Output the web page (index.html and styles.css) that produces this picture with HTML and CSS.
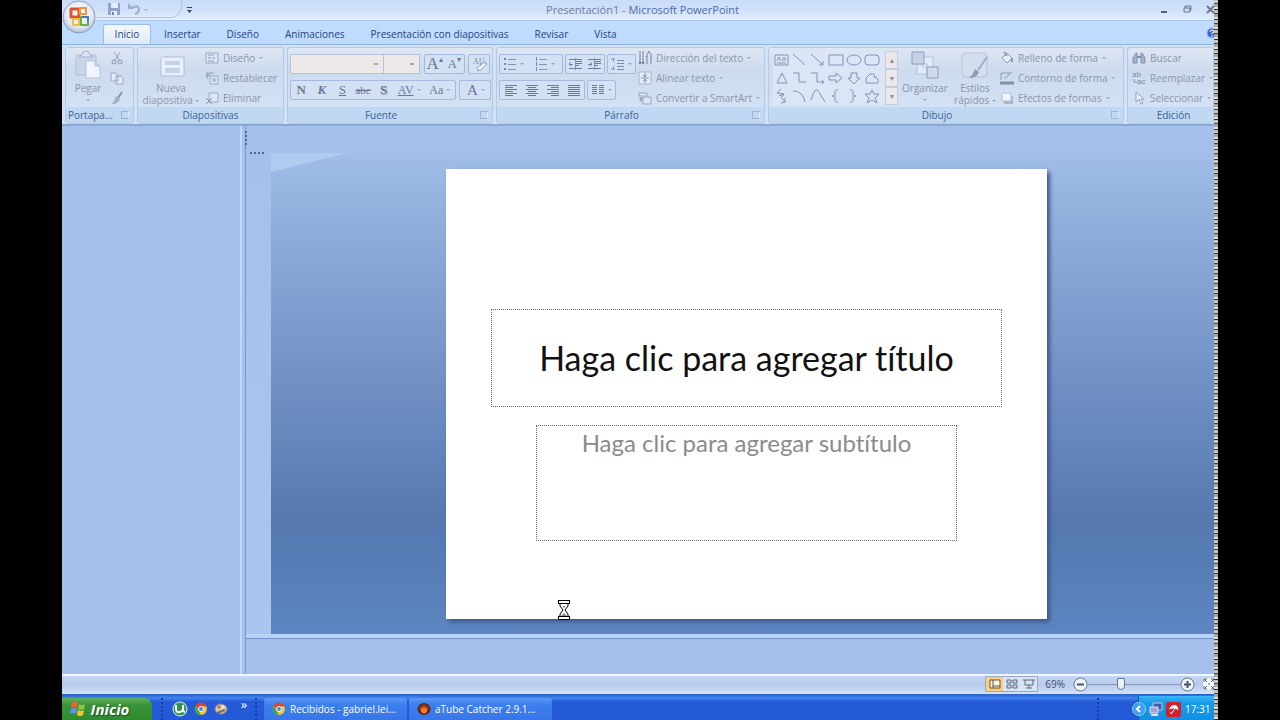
FILE: index.html
```html
<!DOCTYPE html>
<html lang="es">
<head>
<meta charset="utf-8">
<title>Presentación1 - Microsoft PowerPoint</title>
<link rel="stylesheet" href="styles.css">
</head>
<body>
<div class="screen">
<div class="desktop">

<header class="titlebar">
  <button class="orb" aria-label="Botón de Office">
    <svg width="34" height="34" viewBox="0 0 34 34"><defs><radialGradient id="orb" cx=".5" cy=".4" r=".6"><stop offset="0" stop-color="#fff"/><stop offset=".7" stop-color="#e3e9f3"/><stop offset="1" stop-color="#a9b8d2"/></radialGradient></defs><circle cx="17" cy="17" r="16" fill="url(#orb)" stroke="#8d9fc0"/><g fill="none" stroke-linejoin="round"><rect x="9" y="9" width="8" height="8" stroke="#e0562c" stroke-width="3"/><rect x="18" y="8" width="6" height="6" stroke="#f0933a" stroke-width="2"/><rect x="11" y="19" width="6" height="6" stroke="#f2bd30" stroke-width="2"/><rect x="19" y="17" width="7" height="8" stroke="#6fae45" stroke-width="2"/><path d="M20 17h6v5" stroke="#3f79c9" stroke-width="2"/></g></svg>
  </button>
  <div class="quick">
    <button aria-label="Guardar"><svg width="14" height="14" viewBox="0 0 14 14"><path d="M1 1h12v12H1z" fill="#8fa3cd"/><path d="M4 1h7v5H4zM4 9h6v4H4z" fill="#e7eefb"/><path d="M5 10h2v3H5z" fill="#6f83b2"/></svg></button>
    <button aria-label="Deshacer"><svg width="24" height="14" viewBox="0 0 24 14"><path d="M5 6q6-4 7 1 0 4-4 5" fill="none" stroke="#9cadd0" stroke-width="2"/><path d="M1 7V1l6 6z" fill="#9cadd0"/><path d="M17 7h4l-2 2z" fill="#a6b3cf"/></svg></button>
  </div>
  <button class="custom" aria-label="Personalizar"><svg width="7" height="8" viewBox="0 0 7 8"><path d="M1 1h5v1H1zM1 4h5L3.500 7z" fill="#34466b"/></svg></button>
  <h1 class="title">Presentación1 - <span>Microsoft PowerPoint</span></h1>
  <div class="winbtns">
    <button aria-label="Minimizar"><svg width="9" height="9" viewBox="0 0 9 9"><path d="M1 7h6" stroke="#51617f" stroke-width="2"/></svg></button>
    <button aria-label="Restaurar"><svg width="9" height="9" viewBox="0 0 9 9"><path d="M2 3V1h6v4H6M1 3h6v4H1z" fill="none" stroke="#66758f"/></svg></button>
    <button aria-label="Cerrar"><svg width="9" height="9" viewBox="0 0 9 9"><path d="M1 1l7 7M8 1L1 8" stroke="#6b7a96" stroke-width="2"/></svg></button>
  </div>
</header>

<nav class="tabs">
  <button class="tab active">Inicio</button>
  <button class="tab">Insertar</button>
  <button class="tab">Diseño</button>
  <button class="tab">Animaciones</button>
  <button class="tab">Presentación con diapositivas</button>
  <button class="tab">Revisar</button>
  <button class="tab">Vista</button>
  <button class="help" aria-label="Ayuda"><svg width="12" height="12" viewBox="0 0 12 12"><circle cx="6" cy="6" r="5" fill="#3a68c4" stroke="#8fb2ee"/><path d="M4 5q0-2 2-2t2 2L6 6v1M6 8v2" stroke="#fff" fill="none"/></svg></button>
</nav>

<div class="ribbon">
  <section class="group g-clip">
    <div class="body">
      <button class="big"><svg width="32" height="32" viewBox="0 0 32 32"><path d="M4 6h20v20H4z" fill="#c9d4e8" stroke="#b1bfd9"/><path d="M10 6q0-4 4-4t4 4l3 2H7z" fill="#dde5f2" stroke="#a5b3cf"/><path d="M14 12h9l5 5v12H14z" fill="#f0f5fd" stroke="#b5c3dc"/><path d="M23 12v5h5" fill="#c5d0e4" stroke="#b5c3dc"/></svg><span>Pegar</span><i class="dd"></i></button>
      <div class="stack icons">
        <button aria-label="Cortar"><svg width="14" height="14" viewBox="0 0 14 14"><path d="M4 1l5 8M10 1L5 9" stroke="#98a4bd"/><circle cx="4" cy="11" r="2" fill="none" stroke="#8592ae"/><circle cx="10" cy="11" r="2" fill="none" stroke="#8592ae"/></svg></button>
        <button aria-label="Copiar"><svg width="14" height="14" viewBox="0 0 14 14"><path d="M1 2h5l2 2v6H1zM6 5h5l2 2v6H6z" fill="#e3ebf8" stroke="#98a7c4"/></svg></button>
        <button aria-label="Copiar formato"><svg width="14" height="14" viewBox="0 0 14 14"><path d="M12 1L8 7" stroke="#8592ae" stroke-width="2"/><path d="M6 5l4 3q-2 5-7 5l-1-1q3-2 4-7z" fill="#a3b0ca"/></svg></button>
      </div>
    </div>
    <h2>Portapa...<i class="launch"></i></h2>
  </section>

  <section class="group g-slides">
    <div class="body">
      <button class="big"><svg width="32" height="32" viewBox="0 0 32 32"><path d="M6 8h23v19H6z" fill="#e9f0fb" stroke="#aebcd8"/><path d="M10 12h15v4H10zM10 19h15v5H10z" fill="#c5d2e8"/><path d="M6 2v9M1 6h10M3 3l6 6M9 3L3 9" stroke="#dbe4f3"/></svg><span>Nueva<br>diapositiva <i class="dd"></i></span></button>
      <div class="stack">
        <button><svg width="14" height="14" viewBox="0 0 14 14"><path d="M1 2h12v10H1z" fill="#dce6f5" stroke="#9baac6"/><path d="M3 4h6M3 7h3M7 7h3M3 10h6" stroke="#8d9cba"/></svg>Diseño <i class="dd"></i></button>
        <button><svg width="14" height="14" viewBox="0 0 14 14"><path d="M5 5h8v8H5z" fill="#dce6f5" stroke="#9baac6"/><path d="M3 8q-3-4 2-6h4M3 1L1 5l4-1" fill="none" stroke="#8d9cba"/><path d="M7 8h4M7 10h4" stroke="#8d9cba"/></svg>Restablecer</button>
        <button><svg width="14" height="14" viewBox="0 0 14 14"><path d="M4 2h9v9H4z" fill="#dce6f5" stroke="#9baac6"/><path d="M1 7l6 6M7 7l-6 6" stroke="#8190ae"/></svg>Eliminar</button>
      </div>
    </div>
    <h2>Diapositivas</h2>
  </section>

  <section class="group g-font">
    <div class="body rows">
      <div class="row">
        <div class="combos"><select class="c1" aria-label="Fuente"><option></option></select><select class="c2" aria-label="Tamaño"><option></option></select></div>
        <div class="box serif grow2"><button>A<sup>▴</sup></button><button class="sm">A<sup>▾</sup></button></div>
        <div class="box clear"><button aria-label="Borrar formato"><svg width="18" height="16" viewBox="0 0 18 16"><text x="3" y="8" class="aa">AU</text><path d="M7 12l7-6 3 2-6 6H7z" fill="#e6edf9" stroke="#9aa8c5"/></svg></button></div>
      </div>
      <div class="row">
        <div class="box serif fmt"><button><b>N</b></button><button><b><em>K</em></b></button><button><u>S</u></button><button class="strike">abc</button><button><b class="shadow">S</b></button><button class="av"><u>AV</u><i class="dd"></i></button><button class="aacase">Aa<i class="dd"></i></button></div>
        <div class="box serif color"><button>A<i class="dd"></i></button></div>
      </div>
    </div>
    <h2>Fuente<i class="launch"></i></h2>
  </section>

  <section class="group g-par">
    <div class="body">
      <div class="rows">
        <div class="row">
          <div class="box lists"><button aria-label="Viñetas"><svg width="14" height="14" viewBox="0 0 14 14"><path d="M1 2h2M1 7h2M1 12h2" stroke="#7288bb" stroke-width="2"/><path d="M5 2h8M5 7h8M5 12h8" stroke="#8794b0"/></svg><i class="dd"></i></button><button aria-label="Numeración"><svg width="14" height="14" viewBox="0 0 14 14"><path d="M2 0v4M2 5v4M2 10v4" stroke="#7288bb"/><path d="M5 2h8M5 7h8M5 12h8" stroke="#8794b0"/></svg><i class="dd"></i></button></div>
          <div class="box indent"><button aria-label="Disminuir nivel"><svg width="15" height="14" viewBox="0 0 15 14"><path d="M1 2h13M7 4h7M7 6h7M7 8h4M1 11h13" stroke="#6f7d9c"/><path d="M1 7h4M3 5L1 7l2 2" stroke="#6f83bb" fill="none"/><path d="M7 1v12" stroke="#8794b0"/></svg></button><button aria-label="Aumentar nivel"><svg width="15" height="14" viewBox="0 0 15 14"><path d="M1 2h13M7 4h7M7 6h7M7 8h4M1 11h13" stroke="#6f7d9c"/><path d="M1 7h4M3 5l2 2-2 2" stroke="#6f83bb" fill="none"/><path d="M7 1v12" stroke="#8794b0"/></svg></button></div>
          <div class="box"><button aria-label="Interlineado"><svg width="14" height="14" viewBox="0 0 14 14"><path d="M2 1v4M0 3l2-2 2 2M2 9v4M0 11l2 2 2-2" stroke="#8a9bc6" fill="none"/><path d="M6 3h7M6 6h7M6 9h7M6 12h7" stroke="#7c8aaa"/></svg><i class="dd"></i></button></div>
        </div>
        <div class="row">
          <div class="box align"><button aria-label="Izquierda"><svg width="14" height="12" viewBox="0 0 14 12"><path d="M1 1h12M1 3h8M1 5h12M1 7h8M1 9h12M1 11h8" stroke="#6c7996"/></svg></button><button aria-label="Centrar"><svg width="14" height="12" viewBox="0 0 14 12"><path d="M1 1h12M3 3h8M1 5h12M3 7h8M1 9h12M3 11h8" stroke="#6c7996"/></svg></button><button aria-label="Derecha"><svg width="14" height="12" viewBox="0 0 14 12"><path d="M1 1h12M5 3h8M1 5h12M5 7h8M1 9h12M5 11h8" stroke="#6c7996"/></svg></button><button aria-label="Justificar"><svg width="14" height="12" viewBox="0 0 14 12"><path d="M1 1h12M1 3h12M1 5h12M1 7h12M1 9h12M1 11h12" stroke="#6c7996"/></svg></button></div>
          <div class="box"><button aria-label="Columnas"><svg width="14" height="12" viewBox="0 0 14 12"><path d="M1 1h5M8 1h5M1 3h5M8 3h5M1 5h5M8 5h5M1 7h5M8 7h5M1 9h5M8 9h5" stroke="#6c7996"/></svg><i class="dd"></i></button></div>
        </div>
      </div>
      <div class="stack">
        <button><svg width="14" height="14" viewBox="0 0 14 14"><path d="M2 0v13M5 0v13M9 13V5M13 13V5" stroke="#7785a4"/><path d="M8 6l3-6 3 6" fill="none" stroke="#7785a4"/><path d="M1 11l1 2 1-2M4 11l1 2 1-2" stroke="#7785a4"/></svg>Dirección del texto <i class="dd"></i></button>
        <button><svg width="14" height="14" viewBox="0 0 14 14"><path d="M1 1h12v12H1z" fill="#e6edf8" stroke="#a6b4cd"/><path d="M7 2v3M7 9v3M3 7h8M5 4l2 2 2-2M5 10l2-2 2 2" fill="none" stroke="#8291b0"/></svg>Alinear texto <i class="dd"></i></button>
        <button><svg width="14" height="14" viewBox="0 0 14 14"><path d="M1 2h8v3H1zM5 6h8v7H5z" fill="#dce6f5" stroke="#97a6c3"/><path d="M1 8h4M3 6v5" stroke="#8291b0"/></svg>Convertir a SmartArt <i class="dd"></i></button>
      </div>
    </div>
    <h2>Párrafo<i class="launch"></i></h2>
  </section>

  <section class="group g-draw">
    <div class="body">
      <div class="gallery">
        <svg class="shapes" width="108" height="54" viewBox="0 0 108 54" fill="none" stroke="#8291b2"><path d="M2 4h13v10H2zM9 7h4M9 9h4M4 12h9M4 10l2-4 2 4"/><path d="M20 3l12 11M38 3l12 11M46 14h4v-4M56 4h14v10H56z"/><ellipse cx="81" cy="9" rx="7" ry="5"/><rect x="92" y="4" width="14" height="10" rx="3"/><path d="M4 32l5-10 5 10zM20 22h6v9h7M38 22h6v9h7M49 29l2 2-2 2M56 25h7v-3l6 5-6 5v-3h-7zM78 22h6v5h3l-6 6-6-6h3zM93 32v-5l4-4q6-1 4 3 5 0 4 6z"/><path d="M8 38l-4 4 7 1-2 3M6 45l5-2M8 46l4 5M8 52l4-1v-4M20 40q10 0 12 11M38 49q4-15 8-8t6 10M65 39q-4 0-3 3t-3 3q4 0 3 3t3 3M77 39q4 0 3 3t3 3q-4 0-3 3t-3 3M99 39l2 4h5l-4 4 2 5-5-3-5 3 2-5-4-4h5z"/></svg>
        <div class="gscroll"><button aria-label="Subir">▴</button><button aria-label="Bajar">▾</button><button aria-label="Más">▾</button></div>
      </div>
      <button class="big org"><svg width="32" height="32" viewBox="0 0 32 32"><path d="M14 8h10v10H14zM8 15h10v10H8z" fill="#e2eaf7" stroke="#b5c2da"/><path d="M3 3h12v12H3z" fill="#c6d1e5" stroke="#8f9dba"/><path d="M18 18h11v11H18z" fill="#cfd9eb" stroke="#8f9dba"/></svg><span>Organizar</span><i class="dd"></i></button>
      <button class="big est"><svg width="32" height="32" viewBox="0 0 32 32"><rect x="3" y="4" width="25" height="24" rx="4" fill="#d5deee" stroke="#b9c4db"/><path d="M28 8l-9 13" stroke="#a2aec8" stroke-width="2"/><path d="M16 20l4 3q-2 6-10 6 4-3 6-9z" fill="#8e9bb7"/></svg><span>Estilos<br>rápidos <i class="dd"></i></span></button>
      <div class="stack">
        <button><svg width="14" height="14" viewBox="0 0 14 14"><path d="M2 7l5-5 5 5-5 5z" fill="#e7edf8" stroke="#8c9ab6"/><path d="M4 1l3 4M12 7v4" stroke="#8c9ab6" stroke-width="2"/></svg>Relleno de forma <i class="dd"></i></button>
        <button><svg width="14" height="14" viewBox="0 0 14 14"><path d="M1 2h9M1 2v7M4 8l8-7" stroke="#8c9ab6" fill="none"/><path d="M0 12h14" stroke="#8290ae" stroke-width="3"/></svg>Contorno de forma <i class="dd"></i></button>
        <button><svg width="14" height="14" viewBox="0 0 14 14"><path d="M4 5h9v8H4z" fill="#aab6cd"/><path d="M2 2h9v8H2z" fill="#f0f4fb" stroke="#b3bfd6"/></svg>Efectos de formas <i class="dd"></i></button>
      </div>
    </div>
    <h2>Dibujo<i class="launch"></i></h2>
  </section>

  <section class="group g-edit">
    <div class="body">
      <div class="stack">
        <button><svg width="14" height="14" viewBox="0 0 14 14"><path d="M1 12V7l3-5h1v10zM9 12V2h1l3 5v5z" fill="#a7b3cc" stroke="#8290ae"/><path d="M5 6h4" stroke="#8290ae" stroke-width="2"/></svg>Buscar</button>
        <button><svg width="14" height="14" viewBox="0 0 14 14"><text x="0" y="6" class="ab">ab</text><text x="5" y="13" class="ab">ac</text><path d="M2 8v3h3" stroke="#8290ae" fill="none"/></svg>Reemplazar <i class="dd"></i></button>
        <button><svg width="14" height="14" viewBox="0 0 14 14"><path d="M4 1v10l3-3 2 5 2-1-2-4h3z" fill="#edf2fa" stroke="#94a2bf"/></svg>Seleccionar <i class="dd"></i></button>
      </div>
    </div>
    <h2>Edición</h2>
  </section>
</div>

<main class="work">
  <aside class="thumbs"></aside>
  <div class="right">
    <div class="editor">
      <div class="vruler"></div>
      <div class="canvas">
        <svg class="wedge" width="76" height="20" viewBox="0 0 76 20"><path d="M0 0h76L0 19z" fill="#b0cbef"/></svg>
        <article class="slide">
          <div class="ph ph-title">Haga clic para agregar título</div>
          <div class="ph ph-sub">Haga clic para agregar subtítulo</div>
          <svg class="wait" width="12" height="20" viewBox="0 0 12 20"><path d="M2 3v3l3 4-3 4v3h8v-3l-3-4 3-4V3z" fill="#fff" stroke="#000"/><path d="M0 0h12v1H0zM0 19h12v1H0zM0 3h12v1H0zM0 16h12v1H0zM0 0h1v4H0zM11 0h1v4h-1zM0 16h1v4H0zM11 16h1v4h-1z"/><path d="M1 1h10v2H1zM1 17h10v2H1z" fill="#fff"/><path d="M4 6h4L6 8zM3 16l3-3 3 3z" fill="#888"/></svg>
        </article>
      </div>
    </div>
    <div class="notes"></div>
  </div>
</main>

<footer class="status">
  <div class="views">
    <button class="on" aria-label="Normal"><svg width="12" height="12" viewBox="0 0 12 12"><path d="M1 2h10v8H1zM4 2v8M4 8h7" fill="#fff8e0" stroke="#5f543c"/></svg></button>
    <button aria-label="Clasificador"><svg width="12" height="12" viewBox="0 0 12 12"><path d="M1 2h4v3H1zM7 2h4v3H7zM1 7h4v3H1zM7 7h4v3H7z" fill="none" stroke="#5a6680"/></svg></button>
    <button aria-label="Presentación"><svg width="12" height="12" viewBox="0 0 12 12"><path d="M0 2h12M2 2v5h8V2M6 7v3M3 10h6" fill="none" stroke="#5a6680"/></svg></button>
  </div>
  <span class="pct">69%</span>
  <button aria-label="Alejar"><svg width="15" height="15" viewBox="0 0 15 15"><circle cx="7.500" cy="7.500" r="6.500" fill="#eef3fb" stroke="#6a7891"/><path d="M4 7.500h7" stroke="#46536c" stroke-width="2"/></svg></button>
  <input type="range" aria-label="Zoom" min="0" max="100" value="35">
  <button aria-label="Acercar"><svg width="15" height="15" viewBox="0 0 15 15"><circle cx="7.500" cy="7.500" r="6.500" fill="#eef3fb" stroke="#6a7891"/><path d="M4 7.500h7M7.500 4v7" stroke="#46536c" stroke-width="2"/></svg></button>
  <button class="fit" aria-label="Ajustar"><svg width="12" height="12" viewBox="0 0 12 12"><path d="M0 0h12v12H0z" fill="#f4f7fc"/><path d="M1 4V1h3M8 1h3v3M11 8v3H8M4 11H1V8M1 1l3 3M11 1L8 4M11 11L8 8M1 11l3-3M5 6h2" fill="none" stroke="#55627a"/></svg></button>
</footer>

<div class="taskbar">
  <button class="start"><svg width="18" height="16" viewBox="0 0 18 16"><path d="M3 2q3-2 6 0L8 7Q5 5 2 7z" fill="#ee6336"/><path d="M10 3q3 2 6 0l-1 5q-3 2-6 0z" fill="#8cc63e"/><path d="M2 8q3-2 6 0l-1 5q-3-2-6 0z" fill="#5f96ee"/><path d="M9 9q3 2 6 0l-1 5q-3 2-6 0z" fill="#fbc72e"/></svg>Inicio</button>
  <i class="grip"></i>
  <div class="launchers">
    <button aria-label="uTorrent"><svg width="16" height="16" viewBox="0 0 16 16"><circle cx="8" cy="8" r="7" fill="#2f9350" stroke="#dff2e4"/><path d="M4 4v4q0 4 4 3t3-7M11 4v6l2 1" fill="none" stroke="#fff" stroke-width="2"/></svg></button>
    <button aria-label="Chrome"><svg width="14" height="14" viewBox="0 0 14 14"><circle cx="7" cy="7" r="6" fill="#f3c634"/><path d="M1.500 4A6 6 0 0 1 12.500 4L7 5 5 8z" fill="#dc4431"/><path d="M1.500 4L5 9l2 4A6 6 0 0 1 1.500 4" fill="#3da751"/><circle cx="7" cy="7" r="2.500" fill="#4a83e0" stroke="#fff"/></svg></button>
    <button aria-label="Paint"><svg width="14" height="14" viewBox="0 0 14 14"><ellipse cx="7" cy="7" rx="6" ry="5" fill="#d6c5a8" stroke="#8e8479"/><circle cx="5" cy="5" r="1.500" fill="#b76b4c"/><circle cx="9" cy="5" r="1.500" fill="#f3ead7"/><path d="M3 11l8-3" stroke="#6f6a75" stroke-width="2"/></svg></button>
  </div>
  <span class="more">»</span>
  <i class="grip"></i>
  <button class="task"><svg width="14" height="14" viewBox="0 0 14 14"><circle cx="7" cy="7" r="6" fill="#f3c634"/><path d="M1.500 4A6 6 0 0 1 12.500 4L7 5 5 8z" fill="#dc4431"/><path d="M1.500 4L5 9l2 4A6 6 0 0 1 1.500 4" fill="#3da751"/><circle cx="7" cy="7" r="2.500" fill="#4a83e0" stroke="#fff"/></svg>Recibidos - gabriel.lei...</button>
  <button class="task"><svg width="14" height="14" viewBox="0 0 14 14"><ellipse cx="7" cy="7" rx="6.500" ry="6" fill="#5d2418"/><path d="M3 4l1 6 3 2 3-2 1-6-2 3-1-5-1 5-1-5-1 5z" fill="#f5762f"/></svg>aTube Catcher 2.9.1...</button>
  <i class="grip end"></i>
  <div class="tray">
    <button class="chev" aria-label="Mostrar iconos"><svg width="14" height="16" viewBox="0 0 14 16"><circle cx="7" cy="8" r="6.500" fill="#3f9df2" stroke="#8cccff"/><path d="M8 5L5 8l3 3" fill="none" stroke="#fff" stroke-width="2"/></svg></button>
    <svg width="14" height="14" viewBox="0 0 14 14"><path d="M4 1h9v7H4z" fill="#3b59b5" stroke="#c5cbe0"/><path d="M1 5h8v6H1z" fill="#9aa4d8" stroke="#dfe3ef"/><path d="M2 13h7" stroke="#dfe3ef" stroke-width="2"/></svg>
    <svg width="15" height="15" viewBox="0 0 15 15"><rect width="15" height="15" rx="2" fill="#d3202c"/><path d="M3 8q1-5 6-5 4 1 3 6-1-3-3-2-2-2-3 0-2-1-3 1z" fill="#fff"/><path d="M9 6l-3 5q-1 1-2 0" fill="none" stroke="#fff"/></svg>
    <time>17:31</time>
  </div>
</div>

</div>
<div class="edge"></div>
</div>
</body>
</html>
```

FILE: styles.css
```css
* { box-sizing: border-box; }
body { margin: 0; background: #000; font: 10px/14px "Open Sans", "Noto Sans", sans-serif; color: #3b5585; }
button { font: inherit; color: inherit; background: none; border: 0; padding: 0; margin: 0; display: flex; align-items: center; justify-content: center; white-space: nowrap; }
svg { display: block; flex: none; }
h1, h2 { margin: 0; font: inherit; }
.screen { display: flex; height: 100vh; margin: 0 62px; overflow: hidden; }
.desktop { flex: 1; min-width: 0; display: flex; flex-direction: column; background: #a5c0ea; }
.edge { width: 4px; background: repeating-linear-gradient(#c9c5bd 0 3px, #4a4640 3px 4px, #a9a6a0 4px 7px, #e2e0da 7px 9px, #2e2b28 9px 10px); }

.titlebar { position: relative; display: flex; align-items: center; height: 20px; background: linear-gradient(#c9dbf8, #d0e0f9 50%, #e3effe); }
.orb { position: absolute; left: 0; top: 0; z-index: 2; }
.quick { display: flex; align-items: center; gap: 6px; width: 86px; height: 18px; margin-left: 34px; padding-left: 11px; border: 1px solid #b3c7e8; border-top: 0; border-left: 0; border-radius: 0 0 12px 0; align-self: flex-start; }
.custom { margin-left: 4px; }
.title { flex: 1; text-align: center; font-size: 11px; color: #6d7da0; padding-right: 68px; }
.title span { color: #4d6bab; }
.winbtns { display: flex; gap: 14px; width: 54px; padding-bottom: 2px; }

.tabs { display: flex; align-items: flex-end; height: 24px; padding-left: 41px; background: #bfdbff; border-top: 1px solid #a7c6ee; color: #26457d; overflow: hidden; }
.tab { height: 20px; padding: 0 12px 2px; border: 1px solid transparent; border-bottom: 0; }
.tab.active { width: 48px; padding: 0 0 2px; background: linear-gradient(#f3f8fe, #dfeaf8); border-color: #9bbce9; border-radius: 3px 3px 0 0; }
.help { margin-left: auto; margin-right: -4px; align-self: center; }

.ribbon { display: flex; gap: 3px; height: 82px; padding: 2px 0 0 3px; background: #d3e1f4; border-top: 1px solid #93b4e0; border-bottom: 2px solid #88a8d8; overflow: hidden; color: #8c94a9; }
.group { display: flex; flex-direction: column; flex: none; background: linear-gradient(#dee6f3, #cddbee 30%, #d5e4f6); border: 1px solid #b2c9e8; border-radius: 3px; overflow: hidden; }
.group h2 { position: relative; flex: none; height: 16px; line-height: 16px; text-align: center; background: #c0d8f2; color: #3e6299; }
.body { flex: 1; display: flex; min-height: 0; }
.g-clip { width: 69px; } .g-slides { width: 147px; } .g-font { width: 206px; } .g-par { width: 269px; } .g-draw { width: 356px; } .g-edit { flex: 1 1 88px; }
.g-font h2, .g-par h2, .g-draw h2 { padding-right: 18px; }
.g-clip h2 { text-align: left; padding-left: 2px; }
.g-edit h2 { padding-left: 6px; }
.launch { position: absolute; right: 4px; top: 4px; width: 8px; height: 8px; border: 1px solid #9fb4d5; border-right-color: #dce9f8; }
.dd { display: inline-block; width: 0; height: 0; border: 2px solid transparent; border-top: 2px solid #9ba5bb; border-bottom: 0; margin-left: 3px; vertical-align: middle; }
.big { flex-direction: column; justify-content: flex-start; padding-top: 1px; line-height: 12px; }
.big > svg { margin-bottom: 1px; }
.big > .dd { margin: 5px 0 0; }
.big span .dd { margin-left: 0; }
.stack { display: flex; flex-direction: column; }
.stack button { flex: none; height: 20px; padding-bottom: 1px; justify-content: flex-start; gap: 4px; }
.stack .dd { margin-left: 0; }
.g-clip .big { width: 44px; }
.g-slides .big { width: 66px; }
.g-slides .stack { padding-left: 1px; }
.rows { display: flex; flex-direction: column; gap: 6px; padding: 6px 0 0 2px; }
.row { display: flex; gap: 3px; }
.box { display: flex; height: 20px; border: 1px solid #a4bbdd; border-radius: 2px; background: #d3e1f4; }
.box button { padding: 0 3px; }
.box path { shape-rendering: crispEdges; }
.serif { font: 13px/14px "Liberation Serif", serif; color: #6c7892; }
.combos { display: flex; width: 130px; margin-right: 1px; }
select { appearance: none; height: 20px; border: 1px solid #b5c3da; border-radius: 0; background: #ece9e8 linear-gradient(#aaa49e, #aaa49e) no-repeat right 5px center / 4px 2px; }
.c1 { width: 94px; } .c2 { flex: 1; border-left: 0; }
.grow2 { width: 41px; font-size: 17px; }
.grow2 button { flex: 1; padding: 0; }
.grow2 sup { font-size: 8px; line-height: 6px; align-self: flex-start; padding-top: 2px; }
.grow2 .sm { font-size: 13px; }
.clear button { padding: 0 1px; }
.aa { font: 8px "Liberation Serif", serif; fill: #7f8ba6; }
.ab { font: 8px "Liberation Sans", sans-serif; fill: #7c89a6; }
.fmt { width: 166px; }
.fmt button { flex: 1; padding: 0; }
.fmt .av, .fmt .aacase { flex: 1 1 10px; font-size: 12px; }
.strike { text-decoration: line-through; font-size: 11px; }
.shadow { text-shadow: 1px 1px #a4b1c8; }
.color { font-size: 15px; }
.color button { padding: 0 5px 0 7px; }
.g-par .row { gap: 2px; }
.g-par .stack { padding-left: 2px; }
.align button { padding: 0 3px; width: 21px; }
.lists .dd { margin: 0 4px 0 3px; }
.box.indent button { padding: 0 2px; }

.gallery { display: flex; width: 125px; height: 54px; margin: 3px 0 0 4px; background: #dae6f6; }
.gscroll { display: flex; flex-direction: column; width: 13px; margin-left: auto; }
.gscroll button { flex: 1; background: #ece8ea; border: 1px solid #c3cde0; font-size: 8px; line-height: 8px; color: #8e8c93; }
.org { width: 54px; } .est { width: 46px; }
.g-draw .stack { padding-left: 2px; }
.g-edit .stack { padding-left: 4px; }

.work { flex: 1; display: flex; min-height: 0; }
.thumbs { width: 180px; border-right: 2px solid #c0d9f8; }
.right { flex: 1; display: flex; flex-direction: column; border-left: 1px solid #7997c8; margin-left: 3px; min-width: 0; }
.editor { flex: 1; display: flex; padding-top: 27px; background: #a5c0ea; min-height: 0; }
.vruler { width: 25px; position: relative; background: linear-gradient(#a5c0ea, #aac6ee); }
.vruler::before { content: ""; position: absolute; left: -1px; top: -22px; height: 14px; border-left: 2px dotted #4a69a2; }
.vruler::after { content: ""; position: absolute; left: 4px; top: -1px; width: 14px; border-top: 2px dotted #4a69a2; }
.canvas { position: relative; flex: 1; padding: 16px 0 0 8px; background: linear-gradient(#a1bde8, #90aedb 15%, #7897ca 40%, #5578af 77%, #5c85c1); }
.wedge { position: absolute; left: 0; top: 0; }
.slide { position: relative; width: 64.2%; aspect-ratio: 4 / 3; margin: 0 auto; background: #fff; box-shadow: 3px 3px 4px #3e5a8a; padding-top: 140px; font-family: Lato, sans-serif; font-variant-ligatures: none; text-align: center; }
.ph { border: 1px dotted #666; margin: 0 auto; white-space: nowrap; }
.ph-title { width: 85%; height: 98px; font-size: 34px; line-height: 96px; color: #111; }
.ph-sub { width: 70%; height: 116px; margin-top: 18px; font-size: 24px; line-height: 34px; color: #8b8b8b; }
.wait { position: absolute; left: 112px; bottom: -1px; }
.notes { height: 40px; border-top: 4px solid #b8d3f8; box-shadow: inset 0 1px #7391c4; }

.status { display: flex; align-items: center; justify-content: flex-end; height: 20px; padding-bottom: 2px; border-top: 2px solid #eef5ff; background: linear-gradient(#c3d6f2, #b8cbee 50%, #d3e3f8); color: #3f5070; overflow: hidden; }
.views { display: flex; height: 16px; border: 1px solid #95aacd; background: #d8e3f4; }
.views button { width: 17px; }
.views .on { background: #fbcf7c; }
.pct { margin: 0 8px 0 7px; }
input[type=range] { appearance: none; width: 92px; height: 16px; margin: 0; background: linear-gradient(#8799b8, #8799b8) no-repeat center / 100% 1px; }
input[type=range]::-webkit-slider-thumb { appearance: none; width: 8px; height: 12px; border: 1px solid #65748f; border-radius: 1px 1px 4px 4px; background: #edf2fa; }
.fit { margin-left: 8px; margin-right: -1px; }

.taskbar { display: flex; align-items: flex-end; height: 26px; background: linear-gradient(#2c5fc4, #3f84ee 15%, #255ad8 30%, #2358d6); color: #fff; overflow: hidden; }
.taskbar > * { height: 22px; }
.start { width: 90px; gap: 4px; padding-right: 16px; border-radius: 0 8px 0 0; background: linear-gradient(#5fb35c, #3b9439 30%, #2f8a30); font: italic bold 15px/20px "Open Sans", sans-serif; text-shadow: 1px 1px 1px #1d4d1e; }
.grip { width: 4px; margin: 0 8px; background: repeating-linear-gradient(#173f9e 0 2px, transparent 2px 4px) center top / 2px 4px repeat-y; }
.launchers { display: flex; gap: 6px; }
.more { width: 14px; margin-left: 9px; text-align: center; font-size: 13px; line-height: 12px; }
.more + .grip { margin-left: 3px; margin-right: 6px; }
.task { flex: 0 1 143px; min-width: 0; justify-content: flex-start; gap: 4px; padding-left: 8px; margin-right: 2px; border-radius: 3px 3px 0 0; background: linear-gradient(#5b98f6, #3c7fee 30%, #3876e8); }
.grip.end { margin-left: auto; margin-right: 38px; }
.tray { display: flex; align-items: center; gap: 3px; width: 76px; height: 24px; padding-top: 2px; background: linear-gradient(#3bb5f6, #159ae9 30%, #1290e2); border-left: 1px solid #1358a8; }
.chev { margin-left: -7px; }
.tray time { margin-left: 1px; }
```
